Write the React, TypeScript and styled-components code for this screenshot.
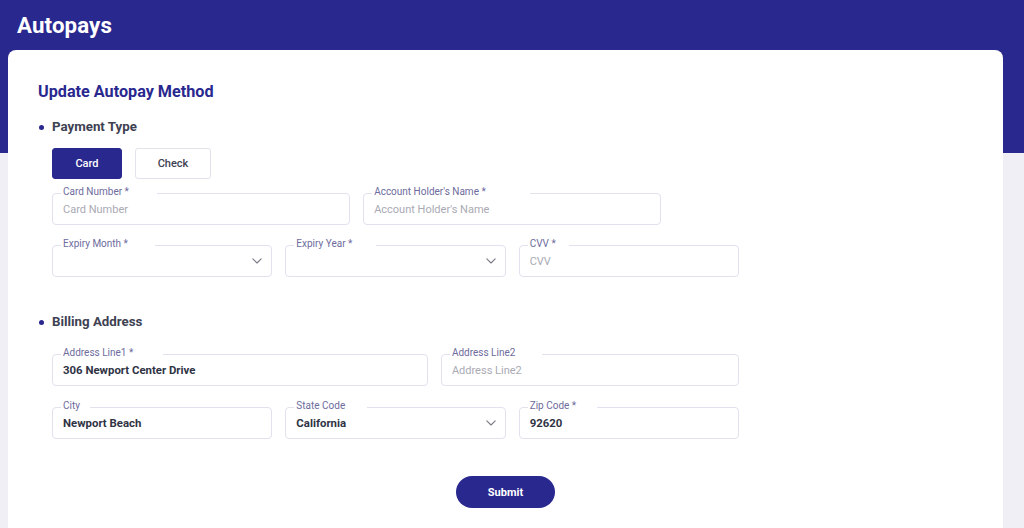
import React from "react";
import styled, { createGlobalStyle } from "styled-components";

const BLUE = "#29288f";

const GlobalStyle = createGlobalStyle`
  html, body { margin: 0; padding: 0; }
  body {
    font-family: Roboto, "Liberation Sans", Arial, sans-serif;
    background: #efeff5;
    overflow: hidden;
  }
  * { box-sizing: border-box; }
`;

const Page = styled.div`
  height: 528px;
  overflow: hidden;
  background: linear-gradient(${BLUE} 0, ${BLUE} 153px, #efeff5 153px);
`;

const Header = styled.header`
  height: 50px;
  display: flex;
  align-items: center;
  padding-left: 17px;
`;

const PageTitle = styled.h1`
  margin: 0;
  color: #ffffff;
  font-size: 22.3px;
  font-weight: 700;
  letter-spacing: 0.1px;
`;

const Card = styled.main`
  margin: 0 21px 0 8px;
  background: #ffffff;
  border-radius: 8px 8px 0 0;
  height: 478px;
  padding-top: 32px;
`;

const Content = styled.div`
  padding-left: 30px;
`;

const FormTitle = styled.h2`
  margin: 0;
  color: ${BLUE};
  font-size: 16.2px;
  line-height: 20px;
  font-weight: 700;
`;

const SectionHeading = styled.h3<{ $top: number }>`
  margin: ${(p) => p.$top}px 0 0 0;
  display: flex;
  align-items: center;
  gap: 8px;
  font-size: 13.3px;
  line-height: 18px;
  font-weight: 700;
  color: #3d4152;
  &::before {
    content: "";
    width: 5px;
    height: 5px;
    border-radius: 50%;
    background: ${BLUE};
    margin-left: 1px;
  }
`;

const Indented = styled.div`
  padding-left: 14px;
`;

const ToggleRow = styled.div`
  display: flex;
  gap: 13px;
  margin-top: 12px;
`;

const ToggleButton = styled.button<{ $active?: boolean; $w: number }>`
  width: ${(p) => p.$w}px;
  height: 31px;
  border-radius: 3px;
  border: 1px solid ${(p) => (p.$active ? BLUE : "#e1e2ec")};
  background: ${(p) => (p.$active ? BLUE : "#ffffff")};
  color: ${(p) => (p.$active ? "#ffffff" : "#3d4152")};
  font-family: Roboto, "Liberation Sans", Arial, sans-serif;
  font-size: 11px;
  font-weight: 500;
  padding: 0;
  cursor: pointer;
`;

const FieldGrid = styled.div<{ $top: number; $rowGap: number }>`
  display: grid;
  grid-template-columns: repeat(12, 64.6px);
  column-gap: 13.2px;
  row-gap: ${(p) => p.$rowGap}px;
  margin-top: ${(p) => p.$top}px;
`;

const Outline = styled.fieldset<{ $span: number; $start?: number }>`
  grid-column: ${(p) => (p.$start ? `${p.$start} / span ${p.$span}` : `span ${p.$span}`)};
  margin: 0;
  padding: 0 9px 0 10px;
  border: 1px solid #e1e2ee;
  border-radius: 4px;
  min-width: 0;
  display: block;
`;

const Legend = styled.legend`
  padding: 0 4px 0 2px;
  margin-left: -2px;
  font-size: 0;
  line-height: 0;
`;

const LegendInner = styled.span`
  display: grid;
`;

const LegendText = styled.span`
  grid-area: 1 / 1;
  font-size: 10px;
  line-height: 12px;
  color: #6e6b9d;
  white-space: nowrap;
  transform: translateY(-1px);
`;

const LegendSizer = styled.span`
  grid-area: 1 / 1;
  font-size: 13.6px;
  line-height: 0;
  visibility: hidden;
  white-space: nowrap;
`;

const FieldBody = styled.div`
  height: 25px;
  margin: -3px 0 3px 0;
  display: flex;
  align-items: center;
  gap: 8px;
`;

const Input = styled.input`
  flex: 1;
  min-width: 0;
  border: none;
  outline: none;
  background: transparent;
  padding: 0;
  font-family: Roboto, "Liberation Sans", Arial, sans-serif;
  font-size: 11.4px;
  font-weight: 700;
  color: #2f3344;
  &::placeholder {
    color: #aaaab4;
    font-size: 11px;
    font-weight: 400;
  }
`;

const SelectValue = styled.span`
  flex: 1;
  font-size: 11.4px;
  font-weight: 700;
  color: #2f3344;
`;

const Chevron = styled.svg`
  flex: none;
  width: 10px;
  height: 6px;
`;

const SubmitRow = styled.div`
  display: flex;
  justify-content: center;
  margin-top: 37px;
`;

const SubmitButton = styled.button`
  width: 99px;
  height: 32px;
  border-radius: 16px;
  border: none;
  background: ${BLUE};
  color: #ffffff;
  font-family: Roboto, "Liberation Sans", Arial, sans-serif;
  font-size: 11px;
  font-weight: 700;
  cursor: pointer;
`;

type FieldProps = {
  label: string;
  required?: boolean;
  span: number;
  start?: number;
  placeholder?: string;
  value?: string;
  select?: boolean;
};

const ChevronIcon = () => (
  <Chevron viewBox="0 0 10 6" fill="none">
    <polyline points="0.8,0.8 5,5 9.2,0.8" stroke="#7a7a86" strokeWidth="1.1" strokeLinecap="round" strokeLinejoin="round" />
  </Chevron>
);

const Field: React.FC<FieldProps> = ({ label, required, span, start, placeholder, value, select }) => {
  const text = required ? `${label} *` : label;
  return (
    <Outline $span={span} $start={start}>
      <Legend>
        <LegendInner>
          <LegendText>{text}</LegendText>
          <LegendSizer>{text}</LegendSizer>
        </LegendInner>
      </Legend>
      <FieldBody>
        {select ? (
          <>
            <SelectValue>{value ?? ""}</SelectValue>
            <ChevronIcon />
          </>
        ) : (
          <Input placeholder={placeholder} defaultValue={value} />
        )}
      </FieldBody>
    </Outline>
  );
};

export default function App() {
  return (
    <>
      <GlobalStyle />
      <Page>
        <Header>
          <PageTitle>Autopays</PageTitle>
        </Header>
        <Card>
          <Content>
            <FormTitle>Update Autopay Method</FormTitle>
            <SectionHeading $top={16}>Payment Type</SectionHeading>
            <Indented>
              <ToggleRow>
                <ToggleButton $active $w={70}>Card</ToggleButton>
                <ToggleButton $w={76}>Check</ToggleButton>
              </ToggleRow>
              <FieldGrid $top={8} $rowGap={14}>
                <Field label="Card Number" required span={4} placeholder="Card Number" />
                <Field label="Account Holder's Name" required span={4} placeholder="Account Holder's Name" />
                <Field label="Expiry Month" required span={3} start={1} select />
                <Field label="Expiry Year" required span={3} select />
                <Field label="CVV" required span={3} placeholder="CVV" />
              </FieldGrid>
            </Indented>
            <SectionHeading $top={36}>Billing Address</SectionHeading>
            <Indented>
              <FieldGrid $top={17} $rowGap={15}>
                <Field label="Address Line1" required span={5} placeholder="Address Line1" value="306 Newport Center Drive" />
                <Field label="Address Line2" span={4} placeholder="Address Line2" />
                <Field label="City" span={3} start={1} placeholder="City" value="Newport Beach" />
                <Field label="State Code" span={3} select value="California" />
                <Field label="Zip Code" required span={3} placeholder="Zip Code" value="92620" />
              </FieldGrid>
            </Indented>
          </Content>
          <SubmitRow>
            <SubmitButton>Submit</SubmitButton>
          </SubmitRow>
        </Card>
      </Page>
    </>
  );
}
